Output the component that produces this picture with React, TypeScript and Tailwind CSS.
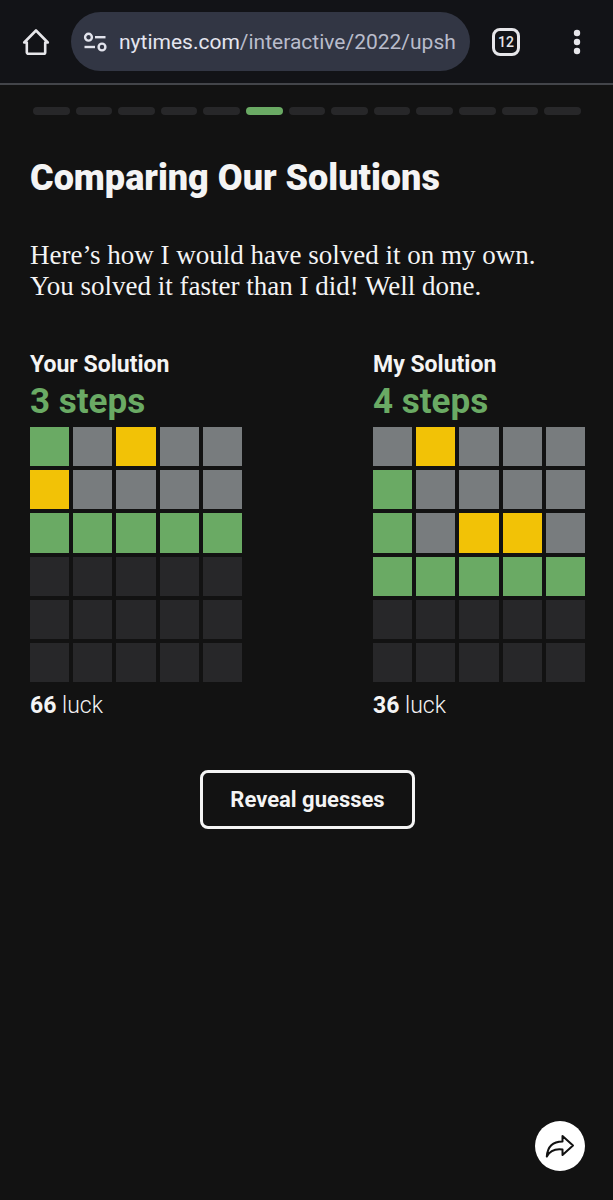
import React from "react";

type Tile = "correct" | "present" | "absent" | "empty";

interface Solution {
  title: string;
  steps: number;
  luck: number;
  rows: string[];
}

// g = right spot, y = wrong spot, x = not in the word, . = unused
const solutions: Solution[] = [
  {
    title: "Your Solution",
    steps: 3,
    luck: 66,
    rows: ["gxyxx", "yxxxx", "ggggg", ".....", ".....", "....."],
  },
  {
    title: "My Solution",
    steps: 4,
    luck: 36,
    rows: ["xyxxx", "gxxxx", "gxyyx", "ggggg", ".....", "....."],
  },
];

const tileTypes: Record<string, Tile> = {
  g: "correct",
  y: "present",
  x: "absent",
  ".": "empty",
};

const tileColors: Record<Tile, string> = {
  correct: "bg-[#6aaa64]",
  present: "bg-[#f2c206]",
  absent: "bg-[#787c7e]",
  empty: "bg-[#272729]",
};

const TOTAL_PAGES = 13;
const CURRENT_PAGE = 5;

const BrowserBar: React.FC = () => (
  <header className="flex h-[85px] items-center border-b-2 border-[#43454a] bg-[#121317] pl-[22px] pr-6">
    <button type="button" aria-label="Home" className="mr-[21px] shrink-0">
      <svg width="28" height="28" viewBox="0 0 28 28" fill="none" stroke="#e6e6ea" strokeWidth="2.6" strokeLinejoin="round" strokeLinecap="round">
        <path d="M2.2 14.5 14 2.5 25.8 14.5H23.2v9.7a1.6 1.6 0 0 1-1.6 1.6H6.4A1.6 1.6 0 0 1 4.8 24.2V14.5z" />
      </svg>
    </button>

    <button
      type="button"
      className="flex h-[59px] min-w-0 flex-1 items-center rounded-full bg-[#323644] px-3 text-left"
    >
      <svg className="mr-3 shrink-0" width="24" height="20" viewBox="0 0 24 20" fill="none" stroke="#e2e3ec" strokeWidth="2.4">
        <circle cx="5.5" cy="5.2" r="3.4" />
        <path d="M12 5.2h10.5" />
        <path d="M1.5 15H12" />
        <circle cx="19" cy="15" r="3.4" />
      </svg>
      <span className="min-w-0 flex-1 overflow-hidden whitespace-nowrap text-[21px] leading-8 text-[#b9bccb]">
        <span className="text-[#e4e5ef]">nytimes.com</span>/interactive/2022/upsh
      </span>
    </button>

    <button
      type="button"
      aria-label="Open tabs"
      className="ml-[22px] flex size-7 shrink-0 items-center justify-center rounded-lg border-[3px] border-[#e6e6ea] text-sm font-medium text-[#e6e6ea]"
    >
      12
    </button>

    <button type="button" aria-label="Menu" className="ml-[45px] shrink-0">
      <svg width="24" height="28" viewBox="0 0 24 28" fill="#e6e6ea">
        <circle cx="12" cy="5" r="3.2" />
        <circle cx="12" cy="14" r="3.2" />
        <circle cx="12" cy="23" r="3.2" />
      </svg>
    </button>
  </header>
);

const Progress: React.FC = () => (
  <div className="flex gap-1.5 pl-[33px] pr-8 pt-[22px]">
    {Array.from({ length: TOTAL_PAGES }, (_, i) => (
      <div
        key={i}
        className={`h-2 flex-1 rounded-full ${i === CURRENT_PAGE ? "bg-[#6aaa64]" : "bg-[#272729]"}`}
      />
    ))}
  </div>
);

const SolutionCard: React.FC<{ solution: Solution }> = ({ solution }) => (
  <section className="w-[212px]">
    <h2 className="text-[23px] font-bold leading-8">{solution.title}</h2>
    <p className="text-[35px] font-bold leading-[42px] text-[#6aaa64]">{solution.steps} steps</p>
    <div className="mt-1 grid grid-cols-5 gap-1">
      {solution.rows
        .join("")
        .split("")
        .map((letter, i) => (
          <div key={i} className={`aspect-square ${tileColors[tileTypes[letter]]}`} />
        ))}
    </div>
    <p className="mt-2 text-[23px] font-light leading-8">
      <span className="font-bold">{solution.luck}</span> luck
    </p>
  </section>
);

const App: React.FC = () => {
  return (
    <div className="min-h-screen bg-[#121212] font-['Roboto',sans-serif] text-[#f4f4f4]">
      <BrowserBar />
      <Progress />

      <main className="pl-[30px] pr-7">
        <h1 className="mt-10 text-4xl font-black leading-[46px]">Comparing Our Solutions</h1>
        <p className="mt-[39px] pr-4 font-['Liberation_Serif',serif] text-[27px] leading-[31px]">
          Here’s how I would have solved it on my own. You solved it faster than I did! Well done.
        </p>

        <div className="mt-[47px] flex justify-between">
          {solutions.map((solution) => (
            <SolutionCard key={solution.title} solution={solution} />
          ))}
        </div>

        <div className="mt-12 flex justify-center">
          <button
            type="button"
            className="h-[59px] rounded-lg border-[3px] border-[#f4f4f4] px-[27px] text-[22px] font-bold"
          >
            Reveal guesses
          </button>
        </div>
      </main>

      <button
        type="button"
        aria-label="Share"
        className="fixed bottom-[29px] right-7 flex size-[50px] items-center justify-center rounded-full bg-white"
      >
        <svg width="30" height="24" viewBox="0 0 30 24" fill="none" stroke="#121212" strokeWidth="2" strokeLinejoin="round">
          <path d="M17.5 2 28 11.5 17.5 21v-5.5C10 14.5 5 16.5 1.8 22.5 2.5 13 8 7.5 17.5 7.5z" />
        </svg>
      </button>
    </div>
  );
};

export default App;
